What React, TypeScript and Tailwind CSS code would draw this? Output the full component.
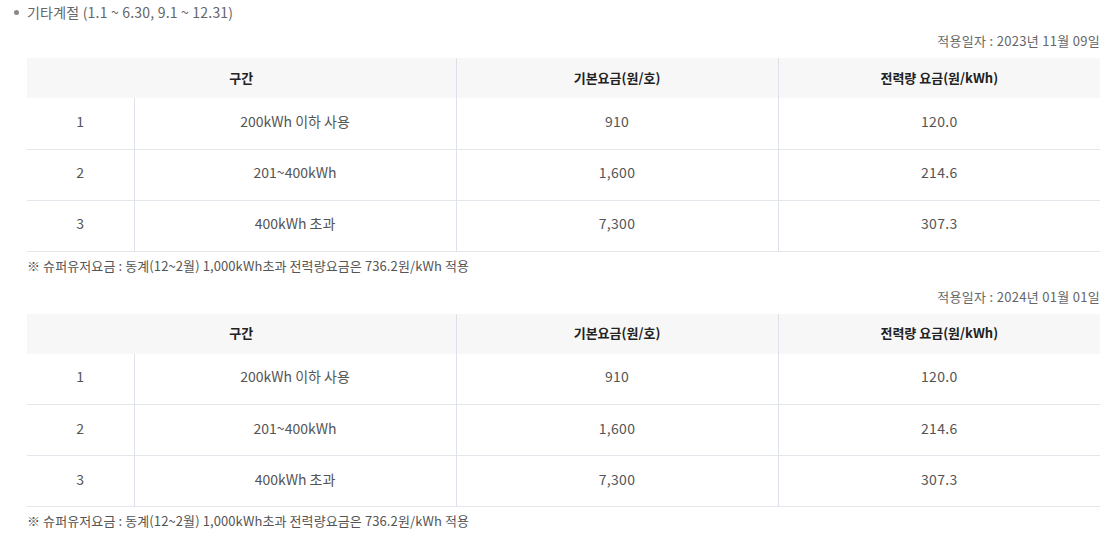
import React from "react";

const rows = [
  ["1", "200kWh 이하 사용", "910", "120.0"],
  ["2", "201~400kWh", "1,600", "214.6"],
  ["3", "400kWh 초과", "7,300", "307.3"],
];

function RateTable() {
  return (
    <table className="w-[1073px] table-fixed border-collapse">
      <colgroup>
        <col className="w-[107px]" />
        <col className="w-[322px]" />
        <col className="w-[322px]" />
        <col className="w-[322px]" />
      </colgroup>
      <thead>
        <tr className="bg-[#f7f7f7] text-[13px] font-bold text-[#222]">
          <th colSpan={2} className="h-[40px] p-0 pb-[1px] font-bold">구간</th>
          <th className="h-[40px] border-l border-[#dde2ea] p-0 pb-[1px] font-bold">기본요금(원/호)</th>
          <th className="h-[40px] border-l border-[#dde2ea] p-0 pb-[1px] font-bold">전력량 요금(원/kWh)</th>
        </tr>
      </thead>
      <tbody className="text-[14px] text-[#555]">
        {rows.map((r) => (
          <tr key={r[0]} className="border-b border-[#e3e6eb]">
            <td className="h-[51px] p-0 pb-[4px] text-center">{r[0]}</td>
            <td className="h-[51px] border-l border-[#dde2ea] p-0 pb-[4px] text-center">{r[1]}</td>
            <td className="h-[51px] border-l border-[#dde2ea] p-0 pb-[4px] text-center tracking-[0.3px]">{r[2]}</td>
            <td className="h-[51px] border-l border-[#dde2ea] p-0 pb-[4px] text-center tracking-[0.3px]">{r[3]}</td>
          </tr>
        ))}
      </tbody>
    </table>
  );
}

function Block({ date }: { date: string }) {
  return (
    <div className="flex flex-col">
      <div className="mb-[7px] text-right text-[13px] leading-[20px] tracking-[0.3px] text-[#666]">적용일자 : {date}</div>
      <RateTable />
      <div className="mt-[4px] text-[13px] leading-[20px] tracking-[0.1px] text-[#555]">
        ※ 슈퍼유저요금 : 동계(12~2월) 1,000kWh초과 전력량요금은 736.2원/kWh 적용
      </div>
    </div>
  );
}

export default function App() {
  return (
    <div
      className="w-[1113px] h-[536px] overflow-hidden bg-white pl-[27px] pr-[13px]"
      style={{ fontFamily: '"Noto Sans CJK KR", "Noto Sans", sans-serif' }}
    >
      <div className="relative h-[24px] text-[14px] leading-[24px] tracking-[0.2px] text-[#666]">
        <span className="absolute left-[-13px] top-[10px] h-[5px] w-[5px] rounded-full bg-[#888]" />
        기타계절 (1.1 ~ 6.30, 9.1 ~ 12.31)
      </div>
      <div className="mt-[7px]">
        <Block date="2023년 11월 09일" />
      </div>
      <div className="mt-[11px]">
        <Block date="2024년 01월 01일" />
      </div>
    </div>
  );
}
